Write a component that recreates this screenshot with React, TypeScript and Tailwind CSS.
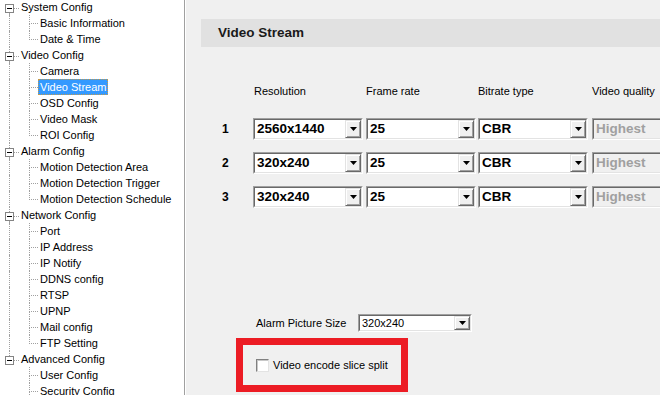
import React from 'react';

const TREE = [
  { label: 'System Config', children: ['Basic Information', 'Date & Time'] },
  { label: 'Video Config', children: ['Camera', 'Video Stream', 'OSD Config', 'Video Mask', 'ROI Config'] },
  { label: 'Alarm Config', children: ['Motion Detection Area', 'Motion Detection Trigger', 'Motion Detection Schedule'] },
  {
    label: 'Network Config',
    children: ['Port', 'IP Address', 'IP Notify', 'DDNS config', 'RTSP', 'UPNP', 'Mail config', 'FTP Setting'],
  },
  { label: 'Advanced Config', children: ['User Config', 'Security Config', 'System Log'] },
];

const STREAMS = [
  { res: '2560x1440', fps: '25', rate: 'CBR' },
  { res: '320x240', fps: '25', rate: 'CBR' },
  { res: '320x240', fps: '25', rate: 'CBR' },
];

const Arrow = () => (
  <svg width="7" height="4" viewBox="0 0 7 4">
    <polygon points="0,0 7,0 3.5,4" fill="#000" />
  </svg>
);

const DropButton = () => (
  <div className="flex w-[16px] shrink-0 items-center justify-center border border-t-[#e3e3e3] border-l-[#e3e3e3] border-b-[#696969] border-r-[#696969] bg-[#f0f0f0] shadow-[inset_1px_1px_#fff,inset_-1px_-1px_#a0a0a0]">
    <Arrow />
  </div>
);

// classic sunken combobox
const Combo = ({ value, big, disabled }: { value: string; big?: boolean; disabled?: boolean }) => (
  <div
    className={`flex shrink-0 border border-t-[#a0a0a0] border-l-[#a0a0a0] border-b-white border-r-white ${
      big ? 'h-[22px] w-[110px]' : 'h-[18px] w-[114px]'
    }`}
  >
    <div
      className={`flex flex-1 border border-t-[#696969] border-l-[#696969] border-b-[#e3e3e3] border-r-[#e3e3e3] ${
        disabled ? 'bg-[#f0f0f0]' : 'bg-white'
      }`}
    >
      <span
        className={`flex flex-1 items-center pl-[2px] ${big ? 'text-[13.5px] font-bold' : 'text-[11px]'} ${
          disabled ? 'text-[#a0a0a0]' : 'text-black'
        }`}
      >
        {value}
      </span>
      {!disabled && <DropButton />}
    </div>
  </div>
);

const ParentRow = ({ label, first, last }: { label: string; first: boolean; last: boolean }) => (
  <div className="flex h-4">
    <div className="flex w-[14px] shrink-0 flex-col pl-[5px]">
      <div className={`ml-[4px] h-[5px] ${first ? '' : 'border-l border-dotted border-[#a0a0a0]'}`} />
      <div className="flex h-[9px] w-[9px] items-center justify-center border border-[#848484] bg-white">
        <div className="h-px w-[5px] bg-black" />
      </div>
      <div className={`ml-[4px] h-[2px] ${last ? '' : 'border-l border-dotted border-[#a0a0a0]'}`} />
    </div>
    <div className="mt-[9px] h-0 w-[5px] border-t border-dotted border-[#a0a0a0]" />
    <span className="ml-[2px] leading-4">{label}</span>
  </div>
);

const ChildRow = ({ label, lastChild, lastGroup }: { label: string; lastChild: boolean; lastGroup: boolean }) => {
  const selected = label === 'Video Stream';
  return (
    <div className="flex h-4">
      <div className="w-[20px] shrink-0 pl-[9px]">
        <div className={`h-full ${lastGroup ? '' : 'border-l border-dotted border-[#a0a0a0]'}`} />
      </div>
      <div className="flex w-[18px] shrink-0 flex-col pl-[9px]">
        <div className="h-[9px] border-l border-b border-dotted border-[#a0a0a0]" />
        <div className={`h-[7px] ${lastChild ? '' : 'border-l border-dotted border-[#a0a0a0]'}`} />
      </div>
      <span
        className={`px-[1px] leading-[14px] border border-dotted ${
          selected ? 'bg-[#3399ff] text-white border-[#c49a4a]' : 'border-transparent'
        }`}
      >
        {label}
      </span>
    </div>
  );
};

export default function App() {
  return (
    <div className="flex h-[395px] w-[660px] overflow-hidden bg-[#f0f0f0] font-['Liberation_Sans',Arial,sans-serif] text-[11px] text-black">
      {/* Tree panel */}
      <div className="w-[185px] shrink-0 border-r border-[#a0a0a0] bg-white">
        <div className="-mt-px">
          {TREE.map((g, gi) => (
            <div key={g.label}>
              <ParentRow label={g.label} first={gi === 0} last={gi === TREE.length - 1} />
              {g.children.map((c, ci) => (
                <ChildRow
                  key={c}
                  label={c}
                  lastChild={ci === g.children.length - 1}
                  lastGroup={gi === TREE.length - 1}
                />
              ))}
            </div>
          ))}
        </div>
      </div>

      {/* Content */}
      <div className="flex-1 border-l border-white pl-[15px] pt-[19px]">
        <div className="flex h-7 items-center bg-[#e1e1e1] pl-[17px] text-[13.5px] font-bold text-[#1a1a1a]">
          Video Stream
        </div>

        <div className="mt-[38px] flex h-[13px] items-center whitespace-nowrap">
          <div className="w-[52px] shrink-0" />
          <div className="w-[113px] shrink-0 pl-px">Resolution</div>
          <div className="w-[112px] shrink-0">Frame rate</div>
          <div className="w-[114px] shrink-0">Bitrate type</div>
          <div className="shrink-0">Video quality</div>
        </div>

        <div className="mt-[20px] flex flex-col gap-[12px]">
          {STREAMS.map((s, i) => (
            <div key={i} className="flex h-[22px] items-center whitespace-nowrap">
              <div className="w-[52px] shrink-0 pl-[21px] text-[12px] font-bold">{i + 1}</div>
              <div className="w-[113px] shrink-0">
                <Combo value={s.res} big />
              </div>
              <div className="w-[112px] shrink-0">
                <Combo value={s.fps} big />
              </div>
              <div className="w-[114px] shrink-0">
                <Combo value={s.rate} big />
              </div>
              <Combo value="Highest" big disabled />
            </div>
          ))}
        </div>

        <div className="mt-[106px] flex h-[18px] items-center pl-[55px]">
          <span className="w-[102px] shrink-0">Alarm Picture Size</span>
          <Combo value="320x240" />
        </div>

        <div className="ml-[35px] mt-[6px] flex h-[54px] w-[172px] items-center border-[7px] border-[#ec1c24] pl-[13px]">
          <div className="h-[13px] w-[13px] border border-t-[#808080] border-l-[#808080] border-b-[#e3e3e3] border-r-[#e3e3e3] bg-white shadow-[inset_1px_1px_#c8c8c8]" />
          <span className="ml-[4px]">Video encode slice split</span>
        </div>
      </div>
    </div>
  );
}
